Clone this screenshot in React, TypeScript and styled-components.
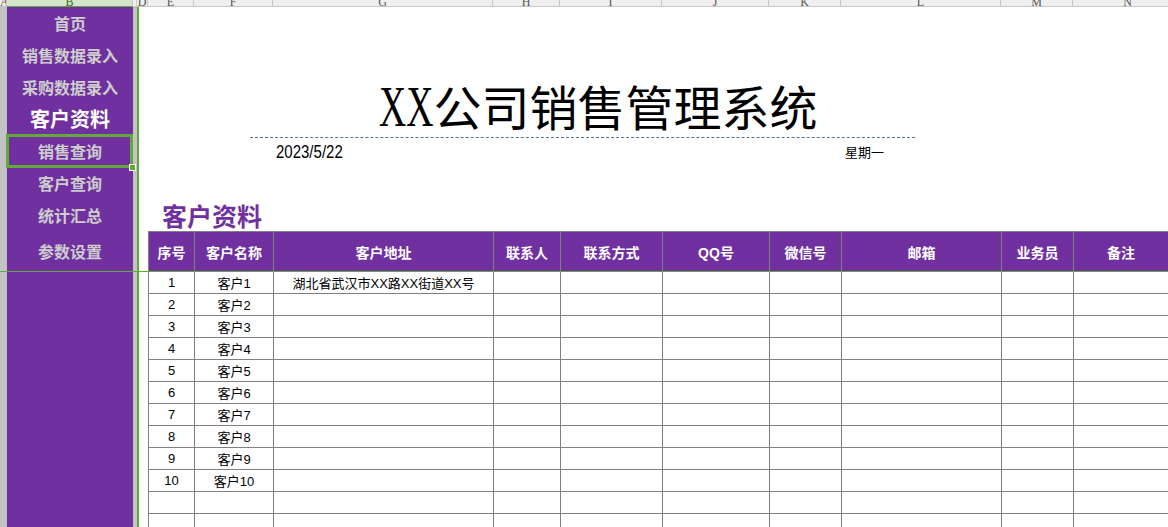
import { FC } from "react";
import styled, { createGlobalStyle, css } from "styled-components";

const PURPLE = "#7030a0";
const GREEN = "#62a83a";
const GRID = "#808080";

const GlobalStyle = createGlobalStyle`
    html, body {
        margin: 0;
        padding: 0;
        background: #fff;
    }
    body {
        font-family: "Liberation Sans", "Noto Sans CJK SC", sans-serif;
    }
    #root {
        width: 1168px;
        height: 527px;
        overflow: hidden;
    }
`;

// column C is too narrow to show its letter
const sheetColumns = [
    { name: "A", width: 7 },
    { name: "B", width: 126, active: true },
    { name: "", width: 4 },
    { name: "D", width: 11 },
    { name: "E", width: 46 },
    { name: "F", width: 79 },
    { name: "G", width: 220 },
    { name: "H", width: 67 },
    { name: "I", width: 102 },
    { name: "J", width: 107 },
    { name: "K", width: 72 },
    { name: "L", width: 160 },
    { name: "M", width: 72 },
    { name: "N", width: 110 },
];

const tableColumns = [
    { title: "序号", width: 46 },
    { title: "客户名称", width: 79 },
    { title: "客户地址", width: 220 },
    { title: "联系人", width: 67 },
    { title: "联系方式", width: 102 },
    { title: "QQ号", width: 107 },
    { title: "微信号", width: 72 },
    { title: "邮箱", width: 160 },
    { title: "业务员", width: 72 },
    { title: "备注", width: 95 },
];

const gridTemplate = tableColumns.map((c) => c.width + "px").join(" ");

const menu = [
    { label: "首页" },
    { label: "销售数据录入" },
    { label: "采购数据录入" },
    { label: "客户资料", current: true },
    { label: "销售查询", selected: true },
    { label: "客户查询" },
    { label: "统计汇总" },
    { label: "参数设置", tall: true },
];

const customers = Array.from({ length: 10 }, (_, i) => ({
    no: String(i + 1),
    name: "客户" + (i + 1),
    address: i === 0 ? "湖北省武汉市XX路XX街道XX号" : "",
}));

const Page = styled.div`
    width: 1168px;
    height: 527px;
    display: flex;
    flex-direction: column;
    overflow: hidden;
`;

const ColumnBar = styled.div`
    display: flex;
    height: 7px;
    flex-shrink: 0;
    background: #efefef;
    overflow: hidden;
`;

const ColumnLabel = styled.div<{ $active?: boolean }>`
    box-sizing: border-box;
    flex-shrink: 0;
    height: 7px;
    overflow: hidden;
    border-right: 1px solid #c8c8c8;
    border-bottom: 1px solid ${(p) => (p.$active ? GREEN : "#c8c8c8")};
    background: ${(p) => (p.$active ? "#d6e6cc" : "#efefef")};
    color: ${(p) => (p.$active ? "#2e6b14" : "#555")};
    font-family: "Liberation Serif", serif;
    font-size: 12px;
    line-height: 12px;
    text-align: center;

    span {
        display: block;
        margin-top: -4px;
    }
`;

const Body = styled.div`
    position: relative;
    display: flex;
    flex: 1;
    min-height: 0;
`;

const Strip = styled.div<{ $w: number; $color: string }>`
    width: ${(p) => p.$w}px;
    flex-shrink: 0;
    background: ${(p) => p.$color};
`;

const FreezeLine = styled.div`
    position: absolute;
    left: 0;
    right: 0;
    top: 264px;
    height: 1px;
    background: ${GREEN};
    pointer-events: none;
`;

const Sidebar = styled.nav`
    width: 126px;
    flex-shrink: 0;
    background: ${PURPLE};
    display: flex;
    flex-direction: column;
`;

const MenuItem = styled.div<{ $current?: boolean; $selected?: boolean; $tall?: boolean }>`
    position: relative;
    height: ${(p) => (p.$tall ? 40 : 32)}px;
    line-height: ${(p) => (p.$tall ? 40 : 32)}px;
    text-align: center;
    font-family: "Noto Sans CJK SC", sans-serif;
    font-weight: 700;
    font-size: 16px;
    color: #cdcdcd;

    ${(p) =>
        p.$current &&
        css`
            color: #fff;
            font-size: 20px;
        `}

    ${(p) =>
        p.$selected &&
        css`
            &::before {
                content: "";
                position: absolute;
                left: -1px;
                right: 0;
                top: -1px;
                bottom: -1px;
                border: 3px solid ${GREEN};
                box-sizing: border-box;
            }
            &::after {
                content: "";
                position: absolute;
                right: -3px;
                bottom: -4px;
                width: 5px;
                height: 5px;
                background: ${GREEN};
                border: 1px solid #fff;
            }
        `}
`;

const Main = styled.main`
    flex: 1;
    min-width: 0;
    overflow: hidden;
    display: flex;
    flex-direction: column;
`;

const TitleBox = styled.div`
    box-sizing: border-box;
    margin-left: 111px;
    width: 665px;
    height: 131px;
    flex-shrink: 0;
    border-bottom: 1px dashed #4a6fb5;
    display: flex;
    align-items: flex-end;
    justify-content: center;
    padding-left: 31px;
    padding-bottom: 4px;
`;

const Title = styled.h1`
    margin: 0;
    font-family: "Noto Sans CJK SC", sans-serif;
    font-weight: 400;
    font-size: 48px;
    line-height: 52px;
    color: #000;
    white-space: nowrap;
`;

const NarrowLatin = styled.span`
    display: inline-block;
    font-family: "Liberation Serif", serif;
    font-size: 58px;
    transform: scaleX(0.65);
    transform-origin: left center;
    margin-right: -29px;
`;

const DateRow = styled.div`
    margin-left: 111px;
    width: 665px;
    height: 26px;
    flex-shrink: 0;
    box-sizing: border-box;
    padding: 0 31px 0 26px;
    display: flex;
    justify-content: space-between;
    align-items: center;
    color: #000;

    .date {
        display: inline-block;
        font-family: "Liberation Sans", sans-serif;
        font-size: 15px;
        transform: scaleY(1.2);
    }

    .weekday {
        font-family: "Noto Sans CJK SC", sans-serif;
        font-size: 13px;
    }
`;

const SectionTitle = styled.h2`
    margin: 0 0 0 23px;
    height: 67px;
    flex-shrink: 0;
    display: flex;
    align-items: flex-end;
    font-family: "Noto Sans CJK SC", sans-serif;
    font-weight: 700;
    font-size: 25px;
    line-height: 32px;
    color: ${PURPLE};
`;

const Table = styled.div`
    margin-left: 9px;
    width: max-content;
    border-top: 1px solid ${GRID};
    border-left: 1px solid ${GRID};
`;

const Row = styled.div<{ $head?: boolean }>`
    display: grid;
    grid-template-columns: ${gridTemplate};
    height: ${(p) => (p.$head ? 40 : 22)}px;
    background: ${(p) => (p.$head ? PURPLE : "#fff")};
`;

const Cell = styled.div<{ $head?: boolean }>`
    box-sizing: border-box;
    border-right: 1px solid ${GRID};
    border-bottom: 1px solid ${GRID};
    display: flex;
    align-items: center;
    justify-content: center;
    white-space: nowrap;
    overflow: hidden;
    font-size: ${(p) => (p.$head ? 14 : 13)}px;
    font-weight: ${(p) => (p.$head ? 700 : 400)};
    color: ${(p) => (p.$head ? "#fff" : "#000")};
`;

const App: FC = () => {
    return (
        <Page>
            <GlobalStyle />
            <ColumnBar>
                {sheetColumns.map((c, i) => (
                    <ColumnLabel
                        key={i}
                        $active={c.active}
                        style={{ width: c.width }}
                    >
                        <span>{c.name}</span>
                    </ColumnLabel>
                ))}
            </ColumnBar>
            <Body>
                <Strip $w={7} $color='#c3c3c3' />
                <Sidebar>
                    {menu.map((m) => (
                        <MenuItem
                            key={m.label}
                            $current={m.current}
                            $selected={m.selected}
                            $tall={m.tall}
                        >
                            {m.label}
                        </MenuItem>
                    ))}
                </Sidebar>
                <Strip $w={4} $color='#c3c3c3' />
                <Strip $w={2} $color={GREEN} />
                <Main>
                    <TitleBox>
                        <Title>
                            <NarrowLatin>XX</NarrowLatin>公司销售管理系统
                        </Title>
                    </TitleBox>
                    <DateRow>
                        <span className='date'>2023/5/22</span>
                        <span className='weekday'>星期一</span>
                    </DateRow>
                    <SectionTitle>客户资料</SectionTitle>
                    <Table>
                        <Row $head>
                            {tableColumns.map((c) => (
                                <Cell $head key={c.title}>
                                    {c.title}
                                </Cell>
                            ))}
                        </Row>
                        {customers.map((c) => (
                            <Row key={c.no}>
                                <Cell>{c.no}</Cell>
                                <Cell>{c.name}</Cell>
                                <Cell>{c.address}</Cell>
                                {tableColumns.slice(3).map((col) => (
                                    <Cell key={col.title} />
                                ))}
                            </Row>
                        ))}
                        {[0, 1].map((i) => (
                            <Row key={"blank" + i}>
                                {tableColumns.map((col) => (
                                    <Cell key={col.title} />
                                ))}
                            </Row>
                        ))}
                    </Table>
                </Main>
                <FreezeLine />
            </Body>
        </Page>
    );
};

export default App;
